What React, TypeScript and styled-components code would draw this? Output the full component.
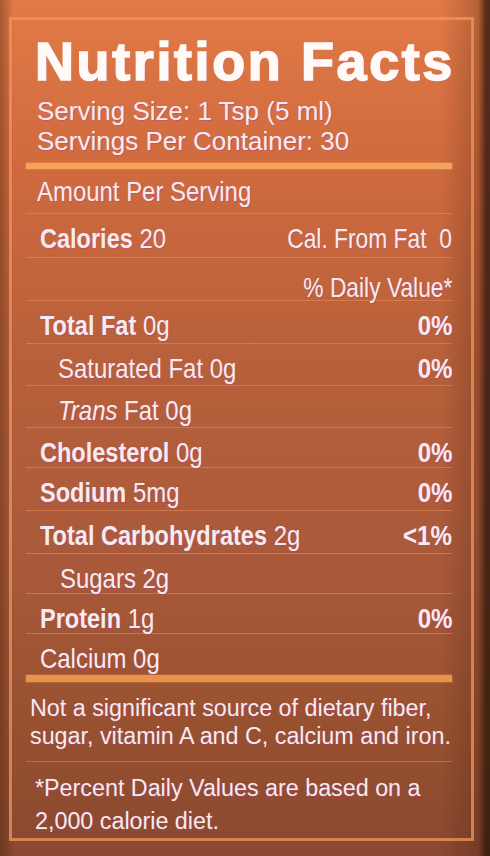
import React from 'react'
import styled, { createGlobalStyle } from 'styled-components'

const GlobalStyle = createGlobalStyle`
    html, body {
        margin: 0;
        padding: 0;
    }
    body {
        width: 490px;
        height: 856px;
        overflow: hidden;
        font-family: 'Liberation Sans', Arial, sans-serif;
        background:
            linear-gradient(90deg, rgba(60, 25, 10, 0.35) 0px, rgba(60, 25, 10, 0) 14px, rgba(60, 25, 10, 0) 440px, rgba(60, 25, 10, 0.25) 478px, rgba(40, 18, 10, 0.75) 486px),
            linear-gradient(180deg, #e27a47 0%, #cf6a3e 20%, #b9613b 40%, #aa5a3a 65%, #97512f 85%, #8a4830 100%);
    }
`

const Page = styled.div`
    box-sizing: border-box;
    height: 856px;
    padding: 17px 16px 0 9px;
    color: #f7eaf0;
    text-shadow: 1px 1px 0 rgba(180, 60, 140, 0.45);
`

const Frame = styled.div`
    box-sizing: border-box;
    height: 824px;
    border: 3px solid rgba(242, 150, 92, 0.75);
    padding: 14px 19px 0 14px;
    display: flex;
    flex-direction: column;
`

const Title = styled.h1`
    margin: 0;
    padding-left: 9px;
    font-size: 54px;
    line-height: 54px;
    font-weight: 700;
    letter-spacing: 2.6px;
    color: #fffaf7;
    -webkit-text-stroke: 1.6px #fffaf7;
    white-space: nowrap;
`

const ServingBlock = styled.div`
    margin-top: 8px;
`

const Serving = styled.div`
    font-size: 26px;
    line-height: 30px;
    padding-left: 11px;
`

const Bar = styled.div<{ $thick: number; $color: string; $gap: number }>`
    flex: none;
    height: ${p => p.$thick}px;
    margin-top: ${p => p.$gap}px;
    background: ${p => p.$color};
    box-shadow: 0 0 2px ${p => p.$color};
`

const Amount = styled.div`
    box-sizing: border-box;
    height: 44px;
    padding: 7px 0 0 11px;
    font-size: 28.5px;
    line-height: 30px;
`

const Row = styled.div<{ $indent: number; $h: number }>`
    box-sizing: border-box;
    flex: none;
    height: ${p => p.$h}px;
    display: flex;
    justify-content: space-between;
    align-items: baseline;
    border-top: 1px solid rgba(238, 140, 82, 0.55);
    padding: 9px 0 0 ${p => p.$indent}px;
    font-size: 28.5px;
    line-height: 30px;
    white-space: nowrap;
`

// the label uses a condensed grotesque; squeeze Liberation Sans to that width
const Condensed = styled.span<{ $side: 'left' | 'right'; $scale: number }>`
    display: inline-block;
    height: 30px;
    line-height: 30px;
    transform: scaleX(${p => p.$scale});
    transform-origin: ${p => p.$side} center;
`

const Nutrient = styled.span`
    font-weight: 700;
    font-size: 28px;
`

const Percent = styled.span`
    font-weight: 700;
    font-size: 28px;
`

const Note = styled.p<{ $lh: number; $gap: number; $indent: number }>`
    margin: ${p => p.$gap}px 0 0 0;
    padding-left: ${p => p.$indent}px;
    font-size: 23.3px;
    line-height: ${p => p.$lh}px;
`

const Divider = styled.div`
    margin-top: 11px;
    height: 1px;
    background: rgba(230, 135, 80, 0.55);
`

type Item = {
    name?: string
    value?: string
    italic?: string
    right?: string
    bold?: boolean
    indent: number
    h: number
}

const items: Item[] = [
    { name: 'Calories', value: '20', right: 'Cal. From Fat\u00a0 0', indent: 14, h: 44 },
    { right: '% Daily Value*', indent: 14, h: 43 },
    { name: 'Total Fat', value: '0g', right: '0%', bold: true, indent: 14, h: 43 },
    { value: 'Saturated Fat 0g', right: '0%', bold: true, indent: 32, h: 42 },
    { italic: 'Trans', value: 'Fat 0g', indent: 32, h: 42 },
    { name: 'Cholesterol', value: '0g', right: '0%', bold: true, indent: 14, h: 40 },
    { name: 'Sodium', value: '5mg', right: '0%', bold: true, indent: 14, h: 43 },
    { name: 'Total Carbohydrates', value: '2g', right: '<1%', bold: true, indent: 14, h: 43 },
    { value: 'Sugars 2g', indent: 34, h: 40 },
    { name: 'Protein', value: '1g', right: '0%', bold: true, indent: 14, h: 40 },
    { value: 'Calcium 0g', indent: 14, h: 42 },
]

export default function App() {
    return (
        <>
            <GlobalStyle />
            <Page>
                <Frame>
                    <Title>Nutrition Facts</Title>
                    <ServingBlock>
                        <Serving>Serving Size: 1 Tsp (5 ml)</Serving>
                        <Serving>Servings Per Container: 30</Serving>
                    </ServingBlock>
                    <Bar $thick={6} $gap={7} $color="#f3a35a" />
                    <Amount>
                        <Condensed $side="left" $scale={0.84}>Amount Per Serving</Condensed>
                    </Amount>
                    {items.map((it, i) => (
                        <Row key={i} $indent={it.indent} $h={it.h}>
                            <Condensed $side="left" $scale={0.84}>
                                {it.name && <Nutrient>{it.name}</Nutrient>}
                                {it.name && ' '}
                                {it.italic && <i>{it.italic} </i>}
                                {it.value}
                            </Condensed>
                            {it.right && (
                                <Condensed $side="right" $scale={it.bold ? 0.86 : 0.8}>
                                    {it.bold ? <Percent>{it.right}</Percent> : it.right}
                                </Condensed>
                            )}
                        </Row>
                    ))}
                    <Bar $thick={7} $gap={0} $color="#e9924b" />
                    <Note $lh={28} $gap={12} $indent={4}>
                        Not a significant source of dietary fiber,<br />
                        sugar, vitamin A and C, calcium and iron.
                    </Note>
                    <Divider />
                    <Note $lh={33} $gap={10} $indent={9}>
                        *Percent Daily Values are based on a<br />
                        2,000 calorie diet.
                    </Note>
                </Frame>
            </Page>
        </>
    )
}
